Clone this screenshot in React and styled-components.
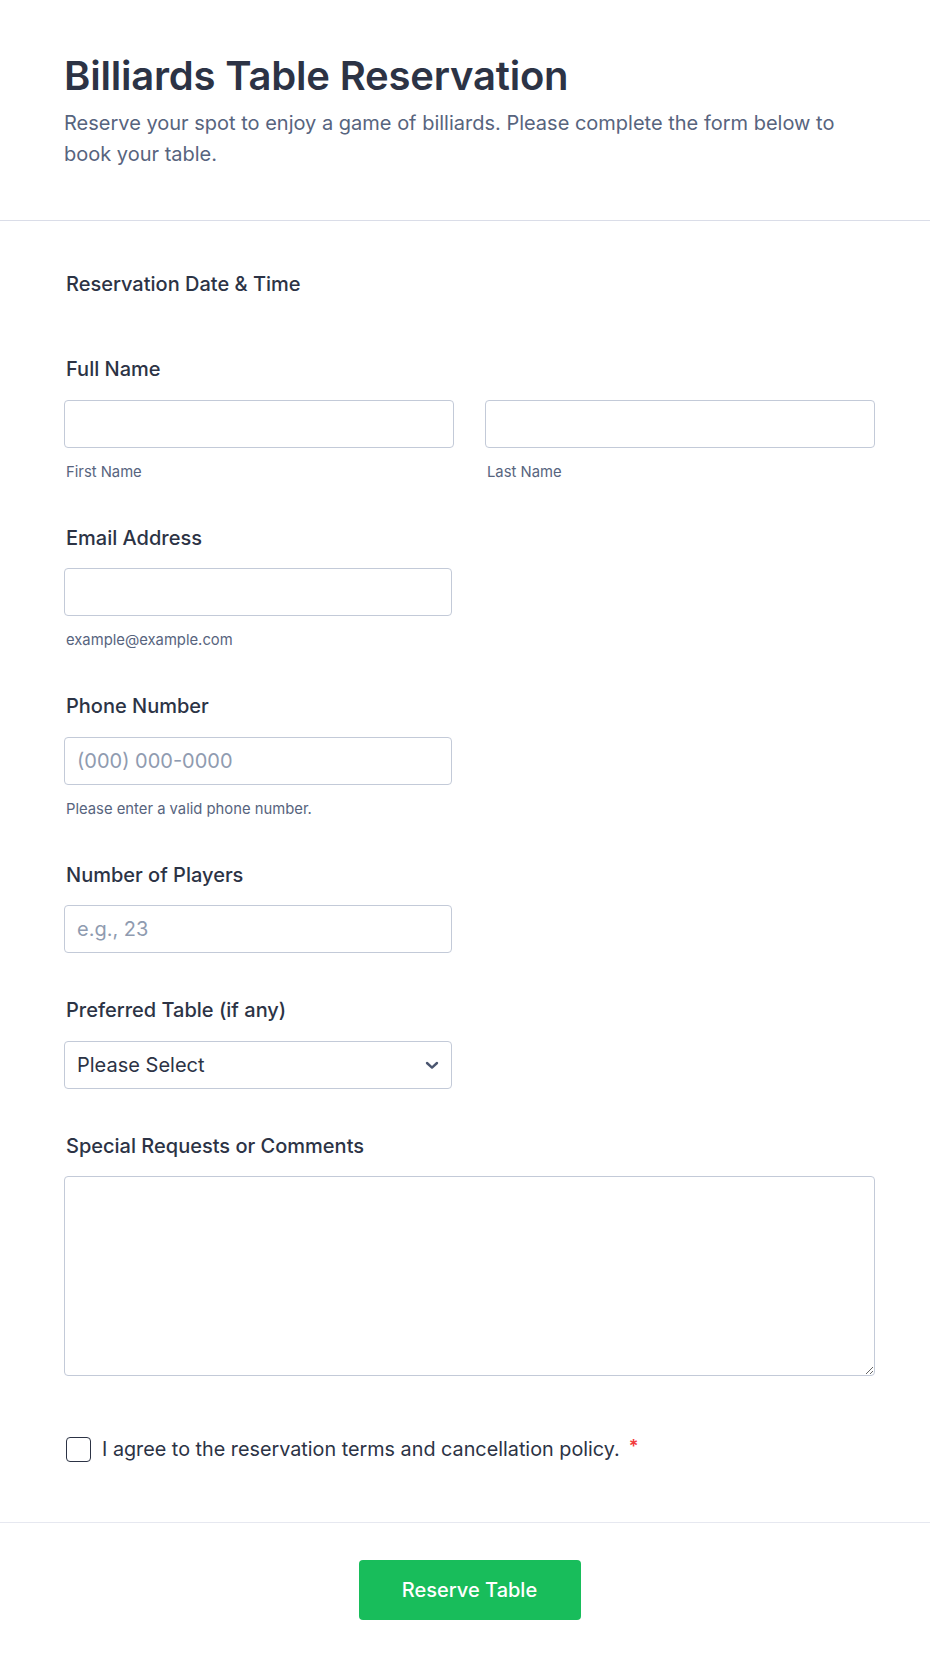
import React from "react";
import styled, { createGlobalStyle } from "styled-components";

const GlobalStyle = createGlobalStyle`
  html, body { margin: 0; padding: 0; background: #ffffff; }
  body { font-family: Inter, "Noto Sans", Arial, sans-serif; color: #2c3345; }
  * { box-sizing: border-box; }
`;

const Page = styled.div`
  width: 930px;
  background: #ffffff;
`;

const Header = styled.header`
  padding: 52px 55px 50px 64px;
  border-bottom: 1px solid #dadde8;
`;

const Title = styled.h1`
  margin: 0;
  font-size: 40px;
  line-height: 48px;
  font-weight: 600;
  color: #2c3345;
  letter-spacing: -0.2px;
`;

const Subtitle = styled.p`
  margin: 8px 0 0;
  font-size: 20px;
  line-height: 31px;
  color: #57647e;
`;

const FormBody = styled.div`
  padding: 29px 55px 0 64px;
  display: flex;
  flex-direction: column;
`;

const Field = styled.div`
  padding: ${(p) => p.$pad || "23px 0"};
  display: flex;
  flex-direction: column;
`;

const Label = styled.label`
  display: block;
  font-size: 20px;
  line-height: 24px;
  font-weight: 500;
  color: #2c3345;
  padding-left: 2px;
  margin-top: -1px;
  margin-bottom: ${(p) => (p.$bare ? "16px" : "18.5px")};
`;

const Row = styled.div`
  display: grid;
  grid-template-columns: 390px 390px;
  column-gap: 31px;
`;

const Col = styled.div`
  display: flex;
  flex-direction: column;
`;

const Input = styled.input`
  width: ${(p) => p.$w || "388px"};
  height: 48px;
  border: 1px solid #c3cad8;
  border-radius: 4px;
  padding: 0 12px;
  font-family: inherit;
  font-size: 20px;
  color: #2c3345;
  background: #ffffff;
  outline: none;
  &::placeholder { color: #8f9bb0; }
`;

const Sublabel = styled.span`
  display: block;
  margin-top: 15px;
  font-size: 14.8px;
  line-height: 18px;
  color: #57647e;
  padding-left: 2px;
`;

const SelectBox = styled.div`
  position: relative;
  width: 388px;
  height: 48px;
  border: 1px solid #c3cad8;
  border-radius: 4px;
  display: flex;
  align-items: center;
  padding: 0 12px;
  font-size: 20px;
  color: #2c3345;
  background: #ffffff;
`;

const Chevron = styled.svg`
  position: absolute;
  right: 11px;
  top: 50%;
  transform: translateY(-50%);
`;

const TextArea = styled.textarea`
  width: 811px;
  height: 200px;
  border: 1px solid #c3cad8;
  border-radius: 4px;
  padding: 12px;
  font-family: inherit;
  font-size: 20px;
  color: #2c3345;
  outline: none;
  resize: vertical;
  display: block;
`;

const CheckRow = styled.div`
  display: flex;
  align-items: center;
  gap: 11px;
  padding-left: 2px;
`;

const CheckBox = styled.span`
  width: 25px;
  height: 25px;
  border: 1.5px solid #2c3345;
  border-radius: 4px;
  flex: none;
  background: #ffffff;
`;

const CheckText = styled.span`
  font-size: 19.8px;
  line-height: 24px;
  color: #2c3345;
`;

const Required = styled.span`
  color: #f23a3c;
  font-size: 18px;
  font-weight: 600;
  margin-left: 9px;
  position: relative;
  top: -3px;
`;

const Footer = styled.footer`
  border-top: 1px solid #e6e8f0;
  padding: 37px 55px 48px 64px;
  display: flex;
  justify-content: center;
`;

const SubmitButton = styled.button`
  width: 222px;
  height: 60px;
  border: none;
  border-radius: 4px;
  background: #18bd5b;
  color: #ffffff;
  font-family: inherit;
  font-size: 20px;
  font-weight: 500;
  cursor: pointer;
`;

export default function App() {
  return (
    <Page>
      <GlobalStyle />
      <Header>
        <Title>Billiards Table Reservation</Title>
        <Subtitle>
          Reserve your spot to enjoy a game of billiards. Please complete the form below to book your table.
        </Subtitle>
      </Header>
      <FormBody>
        <Field>
          <Label $bare>Reservation Date &amp; Time</Label>
        </Field>
        <Field>
          <Label>Full Name</Label>
          <Row>
            <Col>
              <Input $w="390px" />
              <Sublabel>First Name</Sublabel>
            </Col>
            <Col>
              <Input $w="390px" />
              <Sublabel>Last Name</Sublabel>
            </Col>
          </Row>
        </Field>
        <Field>
          <Label>Email Address</Label>
          <Input type="email" />
          <Sublabel>example@example.com</Sublabel>
        </Field>
        <Field>
          <Label>Phone Number</Label>
          <Input placeholder="(000) 000-0000" />
          <Sublabel>Please enter a valid phone number.</Sublabel>
        </Field>
        <Field>
          <Label>Number of Players</Label>
          <Input placeholder="e.g., 23" />
        </Field>
        <Field>
          <Label>Preferred Table (if any)</Label>
          <SelectBox>
            Please Select
            <Chevron width="16" height="12" viewBox="0 0 16 12" fill="none">
              <path d="M3 4L8 8.6L13 4" stroke="#4b5670" strokeWidth="2.4" strokeLinecap="round" strokeLinejoin="round" />
            </Chevron>
          </SelectBox>
        </Field>
        <Field>
          <Label>Special Requests or Comments</Label>
          <TextArea />
        </Field>
        <Field $pad="38px 0 60px">
          <CheckRow>
            <CheckBox />
            <CheckText>
              I agree to the reservation terms and cancellation policy.
              <Required>*</Required>
            </CheckText>
          </CheckRow>
        </Field>
      </FormBody>
      <Footer>
        <SubmitButton>Reserve Table</SubmitButton>
      </Footer>
    </Page>
  );
}
